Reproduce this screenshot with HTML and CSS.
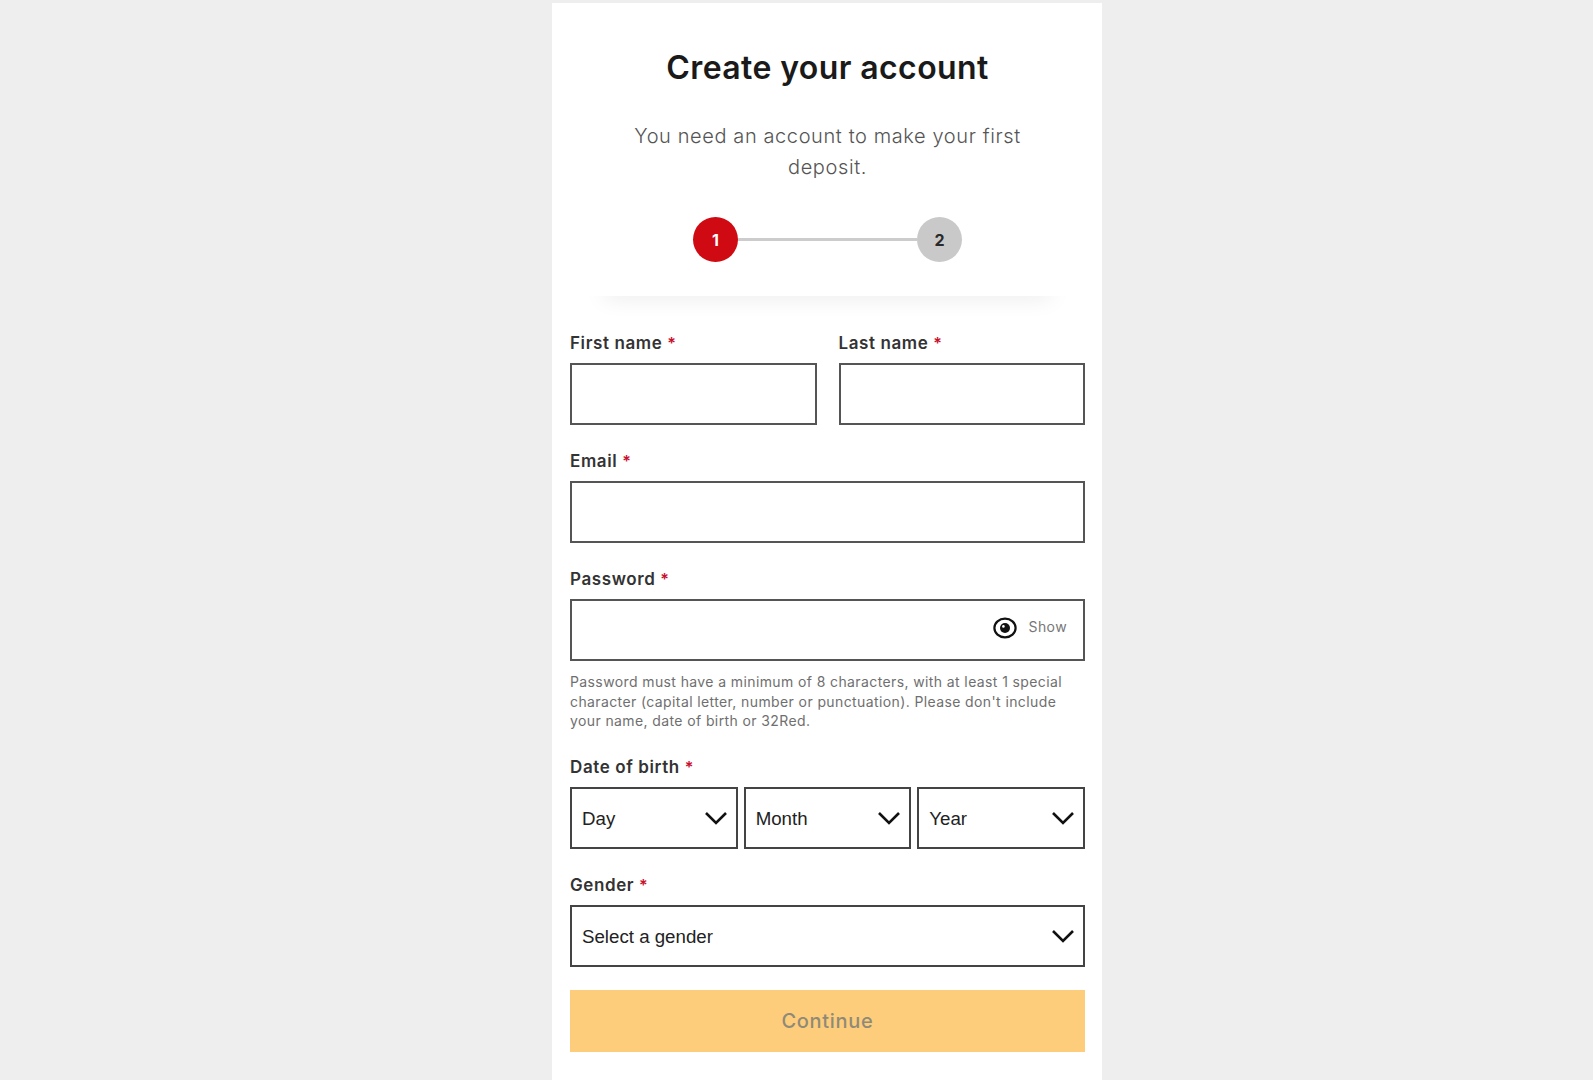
FILE: index.html
```html
<!DOCTYPE html>
<html lang="en">
  <head>
    <meta charset="UTF-8" />
    <meta name="viewport" content="width=device-width, initial-scale=1.0" />
    <title>Create your account</title>

    <link rel="stylesheet" href="styles.css">
  </head>
  <body>
    <div class="card">
      <h1>Create your account</h1>
      <p class="intro">You need an account to make your first deposit.</p>

      <div class="stepper">
        <div class="step active">1</div>
        <div class="step-line"></div>
        <div class="step">2</div>
      </div>
      <div class="header-shadow"></div>

      <form id="form" action="/">
        <div class="row two">
          <div class="input-control">
            <label for="first">First name <span class="req">*</span></label>
            <input type="text" id="first" name="first" />
          </div>
          <div class="input-control">
            <label for="last">Last name <span class="req">*</span></label>
            <input type="text" id="last" name="last" />
          </div>
        </div>

        <div class="input-control">
          <label for="email">Email <span class="req">*</span></label>
          <input type="text" id="email" name="email" />
        </div>

        <div class="input-control">
          <label for="password">Password <span class="req">*</span></label>
          <div class="password-box">
            <input type="password" id="password" name="password" />
            <div class="show">
              <svg width="24" height="22" viewBox="0 0 24 22">
                <ellipse cx="12" cy="11" rx="10.6" ry="9.4" fill="none" stroke="#111" stroke-width="2.2" />
                <circle cx="12" cy="11" r="5" fill="#111" />
                <circle cx="10.4" cy="9.4" r="1.3" fill="#fff" />
              </svg>
              <span>Show</span>
            </div>
          </div>
          <div class="hint">Password must have a minimum of 8 characters, with at least 1 special character (capital letter, number or punctuation). Please don't include your name, date of birth or 32Red.</div>
        </div>

        <div class="input-control">
          <label for="day">Date of birth <span class="req">*</span></label>
          <div class="row three">
            <div class="select-box">
              <select id="day"><option>Day</option></select>
              <svg class="chevron" width="24" height="14" viewBox="0 0 24 14"><path d="M2 2l10 10L22 2" /></svg>
            </div>
            <div class="select-box">
              <select id="month"><option>Month</option></select>
              <svg class="chevron" width="24" height="14" viewBox="0 0 24 14"><path d="M2 2l10 10L22 2" /></svg>
            </div>
            <div class="select-box">
              <select id="year"><option>Year</option></select>
              <svg class="chevron" width="24" height="14" viewBox="0 0 24 14"><path d="M2 2l10 10L22 2" /></svg>
            </div>
          </div>
        </div>

        <div class="input-control">
          <label for="gender">Gender <span class="req">*</span></label>
          <div class="select-box">
            <select id="gender"><option>Select a gender</option></select>
            <svg class="chevron" width="24" height="14" viewBox="0 0 24 14"><path d="M2 2l10 10L22 2" /></svg>
          </div>
        </div>

        <button type="button">Continue</button>
      </form>
    </div>
  </body>
</html>
```

FILE: styles.css
```css
* {
  box-sizing: border-box;
}

html,
body {
  height: 100%;
}

body {
  margin: 0;
  background-color: #eeeeee;
  font-family: Inter, "Noto Sans", sans-serif;
  overflow: hidden;
}

.card {
  width: 550px;
  height: 1077px;
  margin: 3px 0 0 552px;
  padding: 41px 17px 0 18px;
  background-color: white;
}

h1 {
  margin: 0;
  color: #1a1a1a;
  font-size: 32px;
  font-weight: 600;
  letter-spacing: 0.4px;
  line-height: 48px;
  text-align: center;
}

.intro {
  width: 400px;
  margin: 29px auto 0;
  color: #555555;
  font-size: 20px;
  font-weight: 350;
  letter-spacing: 0.6px;
  line-height: 31px;
  text-align: center;
}

.stepper {
  display: flex;
  align-items: center;
  justify-content: center;
  margin-top: 34px;
}

.step {
  display: flex;
  align-items: center;
  justify-content: center;
  width: 45px;
  height: 45px;
  border-radius: 50%;
  background-color: #c9c9c9;
  color: #2a2a2a;
  font-size: 16px;
  font-weight: 700;
}

.step.active {
  background-color: #cf0a12;
  color: white;
}

.step-line {
  width: 179px;
  height: 3px;
  background-color: #cccccc;
}

.header-shadow {
  position: relative;
  height: 37px;
  margin: 34px 0 0;
  overflow: hidden;
}

.header-shadow::before {
  content: "";
  position: absolute;
  top: -10px;
  left: 34px;
  right: 34px;
  height: 10px;
  box-shadow: 0 0 22px rgba(0, 0, 0, 0.13);
}

.row.two {
  display: grid;
  grid-template-columns: 1fr 1fr;
  column-gap: 22px;
}

.row.three {
  display: grid;
  grid-template-columns: repeat(3, 1fr);
  column-gap: 6px;
}

.input-control {
  display: flex;
  flex-direction: column;
  margin-bottom: 26px;
}

.input-control label {
  height: 20px;
  margin-bottom: 10px;
  color: #333333;
  font-size: 17px;
  font-weight: 600;
  letter-spacing: 0.6px;
  line-height: 20px;
}

.req {
  color: #c8102e;
  font-size: 16px;
  letter-spacing: 0;
}

.input-control input,
.select-box select {
  display: block;
  width: 100%;
  height: 62px;
  border: 2px solid #555555;
  border-radius: 0;
  background-color: white;
  outline: 0;
}

.password-box,
.select-box {
  position: relative;
}

.show {
  position: absolute;
  top: 18px;
  right: 18px;
  display: flex;
  align-items: center;
  gap: 12px;
  color: #777777;
  font-size: 14px;
  letter-spacing: 0.4px;
}

.show span {
  margin-top: -4px;
}

.hint {
  margin-top: 11px;
  color: #6f6f6f;
  font-size: 14px;
  letter-spacing: 0.39px;
  line-height: 19.6px;
}

.select-box select {
  padding: 2px 40px 0 10px;
  border-color: #444444;
  color: #222222;
  font-family: "Liberation Sans", Arial, sans-serif;
  font-size: 18.7px;
  appearance: none;
}

.chevron {
  position: absolute;
  top: 24px;
  right: 10px;
  pointer-events: none;
}

.chevron path {
  fill: none;
  stroke: #111111;
  stroke-width: 2.6;
}

#form button {
  display: block;
  width: 100%;
  height: 62px;
  margin-top: -3px;
  padding-top: 1px;
  border: none;
  background-color: #fecd7c;
  color: #8f8a78;
  font-family: inherit;
  font-size: 20px;
  font-weight: 500;
  letter-spacing: 0.7px;
}
```
